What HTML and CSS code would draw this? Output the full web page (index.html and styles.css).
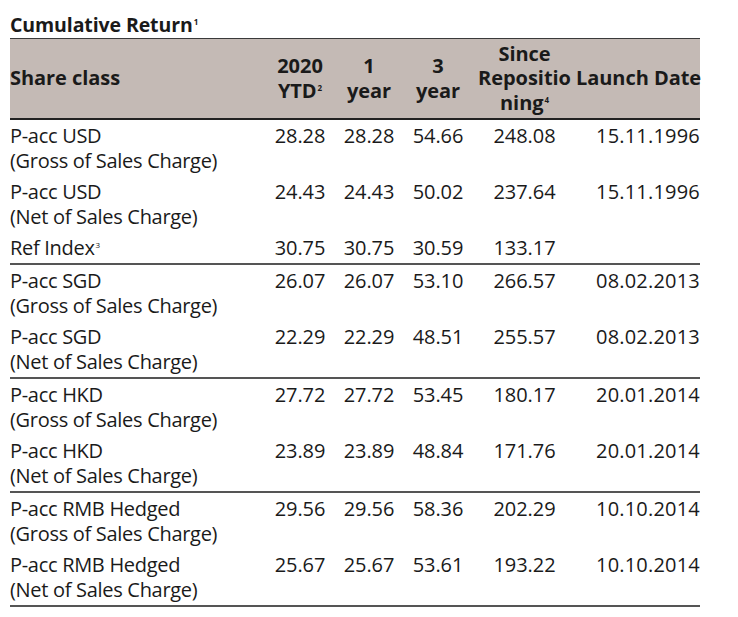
FILE: index.html
```html
<!DOCTYPE html>
<html lang="en">
<head>
<meta charset="utf-8">
<title>Cumulative Return</title>
<link rel="stylesheet" href="styles.css">
</head>
<body>
<div class="wrap">
  <h1 class="title">Cumulative Return<sup>1</sup></h1>
  <table class="perf">
    <colgroup>
      <col class="c-name"><col class="c-ytd"><col class="c-1y"><col class="c-3y"><col class="c-since"><col class="c-date">
    </colgroup>
    <thead>
      <tr>
        <th class="left">Share class</th>
        <th>2020<br>YTD<sup>2</sup></th>
        <th>1<br>year</th>
        <th>3<br>year</th>
        <th>Since<br>Repositio<br>ning<sup>4</sup></th>
        <th class="right">Launch Date</th>
      </tr>
    </thead>
    <tbody>
      <tr><td class="name">P-acc USD<br>(Gross of Sales Charge)</td><td>28.28</td><td>28.28</td><td>54.66</td><td>248.08</td><td class="date">15.11.1996</td></tr>
      <tr><td class="name">P-acc USD<br>(Net of Sales Charge)</td><td>24.43</td><td>24.43</td><td>50.02</td><td>237.64</td><td class="date">15.11.1996</td></tr>
      <tr class="end"><td class="name">Ref Index<sup>3</sup></td><td>30.75</td><td>30.75</td><td>30.59</td><td>133.17</td><td class="date"></td></tr>
      <tr><td class="name">P-acc SGD<br>(Gross of Sales Charge)</td><td>26.07</td><td>26.07</td><td>53.10</td><td>266.57</td><td class="date">08.02.2013</td></tr>
      <tr class="end"><td class="name">P-acc SGD<br>(Net of Sales Charge)</td><td>22.29</td><td>22.29</td><td>48.51</td><td>255.57</td><td class="date">08.02.2013</td></tr>
      <tr><td class="name">P-acc HKD<br>(Gross of Sales Charge)</td><td>27.72</td><td>27.72</td><td>53.45</td><td>180.17</td><td class="date">20.01.2014</td></tr>
      <tr class="end"><td class="name">P-acc HKD<br>(Net of Sales Charge)</td><td>23.89</td><td>23.89</td><td>48.84</td><td>171.76</td><td class="date">20.01.2014</td></tr>
      <tr><td class="name">P-acc RMB Hedged<br>(Gross of Sales Charge)</td><td>29.56</td><td>29.56</td><td>58.36</td><td>202.29</td><td class="date">10.10.2014</td></tr>
      <tr class="end"><td class="name">P-acc RMB Hedged<br>(Net of Sales Charge)</td><td>25.67</td><td>25.67</td><td>53.61</td><td>193.22</td><td class="date">10.10.2014</td></tr>
    </tbody>
  </table>
</div>
</body>
</html>
```
FILE: styles.css
```css
html, body {
  margin: 0;
  padding: 0;
  background: #ffffff;
}
body {
  font-family: "Open Sans", "Noto Sans", "Liberation Sans", sans-serif;
  color: #1a1a1a;
}
.wrap {
  padding: 12px 0 0 10px;
  width: 690px;
}
.title {
  margin: 0;
  font-size: 19.5px;
  font-weight: 700;
  line-height: 26px;
  letter-spacing: -0.1px;
}
sup {
  font-size: 8px;
  vertical-align: 7px;
  line-height: 0;
  font-weight: 700;
  margin-left: 1px;
}
.perf {
  width: 690px;
  border-collapse: collapse;
  table-layout: fixed;
  font-size: 20px;
  line-height: 25px;
  letter-spacing: -0.05px;
}
.c-name { width: 255px; }
.c-ytd { width: 70px; }
.c-1y { width: 68px; }
.c-3y { width: 70px; }
.c-since { width: 103px; }
.c-date { width: 124px; }
.perf thead tr {
  background: #c4bab5;
  border-top: 1px solid #3a3a3a;
  border-bottom: 2px solid #222222;
}
.perf th {
  font-weight: 700;
  text-align: center;
  vertical-align: middle;
  padding: 1px 0 1px 0;
  height: 77px;
  line-height: 24.5px;
  white-space: nowrap;
}
.perf th.left { text-align: left; }
.perf th.right { text-align: right; }
.perf td {
  text-align: center;
  vertical-align: top;
  padding: 2.5px 0 3.5px 0;
  white-space: nowrap;
}
.perf td.name {
  text-align: left;
  letter-spacing: -0.3px;
}
.perf td.name sup { font-weight: 400; }
.perf td.date {
  text-align: right;
  letter-spacing: 0.2px;
}
.perf tr.end { border-bottom: 2px solid #555555; }
```
